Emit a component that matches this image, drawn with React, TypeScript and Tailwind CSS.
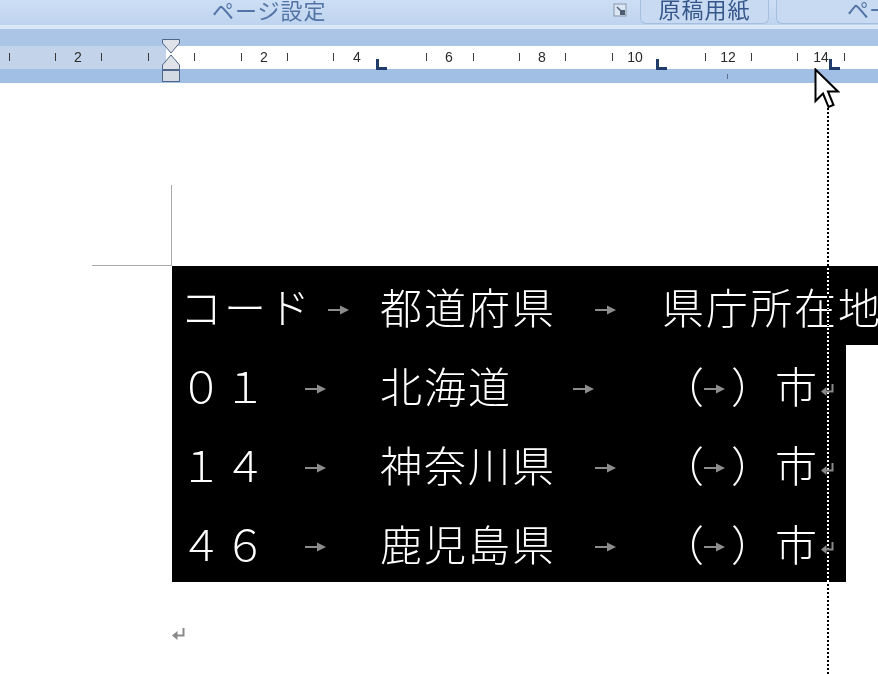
import React from 'react';

const UNIT = 46.4;
const ORIGIN = 171;
const LABELS = [-2, 2, 4, 6, 8, 10, 12, 14];
const TICKS = [-3.5, -2.5, -1.5, -0.5, 0.5, 1.5, 2.5, 3.5, 5.5, 6.5, 7.5, 8.5, 9.5, 11.5, 12.5, 13.5, 14.5];
const TAB_STOPS = [376, 656, 829];

const jp = "font-['Noto_Sans_CJK_JP','Liberation_Sans',sans-serif]";

function TabArrow() {
  return (
    <svg width="22" height="10" viewBox="0 0 22 10" className="mt-[8px] shrink-0">
      <rect x="0" y="4" width="14" height="2" fill="#8c8c8c" />
      <polygon points="12,0.5 21,5 12,9.5" fill="#8c8c8c" />
    </svg>
  );
}

function ReturnMark() {
  return (
    <svg width="14" height="14" viewBox="0 0 14 14" className="shrink-0">
      <path d="M11.5 1 V8.5 H4" stroke="#8a8a8a" strokeWidth="2" fill="none" />
      <polygon points="0,8.5 5.5,4 5.5,13" fill="#8a8a8a" />
    </svg>
  );
}

function Ribbon() {
  return (
    <div className={`flex h-[25px] overflow-hidden bg-linear-to-b from-[#cddff5] to-[#bed3ee] ${jp}`}>
      <div className="flex w-[640px] shrink-0 items-start">
        <span className="ml-[212px] -mt-[4px] text-[22px] leading-[26px] tracking-[1px] text-[#5374a6]">ページ設定</span>
        <svg width="15" height="15" viewBox="0 0 15 15" className="ml-auto mr-[12px] mt-[3px]">
          <rect x="1" y="1" width="12" height="12" fill="#dbe6f3" stroke="#8796ab" />
          <rect x="7" y="7" width="5" height="5" fill="#4d5d74" />
          <path d="M4 4 L9 9" stroke="#4d5d74" strokeWidth="1.5" />
        </svg>
      </div>
      <div className="flex h-[24px] w-[129px] shrink-0 items-start justify-center rounded-b-[6px] border border-t-0 border-[#a6bedf] bg-[#c8daf2]">
        <span className="-mt-[5px] text-[22px] leading-[26px] tracking-[1px] text-[#35578b]">原稿用紙</span>
      </div>
      <div className="ml-[7px] flex h-[24px] min-w-0 flex-1 items-start overflow-hidden rounded-bl-[6px] border border-t-0 border-r-0 border-[#a6bedf] bg-[#c8daf2]">
        <span className="ml-[70px] -mt-[5px] whitespace-nowrap text-[22px] leading-[26px] text-[#5374a6]">ページ罫線</span>
      </div>
    </div>
  );
}

function Ruler() {
  return (
    <div className="relative h-[58px]">
      <div className="h-[4px] bg-[#dae7f6]" />
      <div className="h-[17px] bg-[#abc5e7]" />
      <div className="flex h-[23px]">
        <div className="w-[166px] bg-[#c3d4ea]" />
        <div className="flex-1 bg-white" />
      </div>
      <div className="h-[14px] bg-[#a1bee4]" />

      {TICKS.map((u) => (
        <div
          key={`t${u}`}
          className="absolute top-[28px] h-[8px] w-px bg-[#3a3a3a]"
          style={{ left: Math.round(ORIGIN + u * UNIT) }}
        />
      ))}
      {LABELS.map((u) => (
        <span
          key={`l${u}`}
          className="absolute top-[24px] w-[24px] -translate-x-1/2 text-center font-['Liberation_Sans',sans-serif] text-[14px] leading-[16px] text-[#2a2a2a]"
          style={{ left: Math.round(ORIGIN + u * UNIT) }}
        >
          {Math.abs(u)}
        </span>
      ))}
      {TAB_STOPS.map((x) => (
        <div key={`s${x}`} className="absolute top-[34px] h-[11px] w-[11px]" style={{ left: x }}>
          <div className="h-[8px] w-[3px] bg-[#1f3b69]" />
          <div className="h-[3px] w-[11px] bg-[#1f3b69]" />
        </div>
      ))}
      <div className="absolute left-[727px] top-[49px] h-[5px] w-px bg-[#5b6f8c]" />

      <svg width="20" height="45" viewBox="0 0 20 45" className="absolute left-[161px] top-[13px]">
        <path d="M1.5 1.5 H18.5 V5 L10 15 L1.5 5 Z" fill="#dfe3e9" stroke="#4e6689" />
        <path d="M10 17 L18.5 27 V31.5 H1.5 V27 Z" fill="#dfe3e9" stroke="#4e6689" />
        <rect x="1.5" y="32.5" width="17" height="11" fill="#d4dae3" stroke="#4e6689" />
      </svg>
    </div>
  );
}

interface RowProps {
  first: string;
  firstW: string;
  firstGap: string;
  second: string;
  secondW: string;
  secondGap: string;
  children: React.ReactNode;
  wide?: boolean;
}

function Row({ first, firstW, firstGap, second, secondW, secondGap, children, wide }: RowProps) {
  return (
    <div className={`flex h-[79px] items-center bg-black pl-[8px] text-[42px] font-light leading-none tracking-[2px] text-white ${wide ? 'w-[706px]' : 'w-[674px]'}`}>
      <span className={`${firstW} shrink-0 whitespace-nowrap`}>{first}</span>
      <div className={`${firstGap} flex shrink-0`}>
        <TabArrow />
      </div>
      <span className={`${secondW} shrink-0 whitespace-nowrap`}>{second}</span>
      <div className={`${secondGap} flex shrink-0`}>
        <TabArrow />
      </div>
      {children}
    </div>
  );
}

function CityCell() {
  return (
    <div className="flex items-center">
      <span className="w-[42px] shrink-0">（</span>
      <div className="flex w-[27px] shrink-0">
        <TabArrow />
      </div>
      <span className="w-[44px] shrink-0">）</span>
      <span className="w-[46px] shrink-0">市</span>
      <div className="mt-[10px]">
        <ReturnMark />
      </div>
    </div>
  );
}

function Document() {
  return (
    <div className={`flex flex-col ${jp}`}>
      <div className="ml-[92px] mt-[102px] h-[81px] w-[80px] border-r border-b border-[#a8a8a8]" />
      <div className="ml-[172px] flex flex-col">
        <Row first="コード" firstW="w-[148px]" firstGap="w-[52px]" second="都道府県" secondW="w-[215px]" secondGap="w-[67px]" wide>
          <span className="whitespace-nowrap">県庁所在地</span>
        </Row>
        <Row first="０１" firstW="w-[125px]" firstGap="w-[75px]" second="北海道" secondW="w-[193px]" secondGap="w-[89px]">
          <CityCell />
        </Row>
        <Row first="１４" firstW="w-[125px]" firstGap="w-[75px]" second="神奈川県" secondW="w-[215px]" secondGap="w-[67px]">
          <CityCell />
        </Row>
        <Row first="４６" firstW="w-[125px]" firstGap="w-[75px]" second="鹿児島県" secondW="w-[215px]" secondGap="w-[67px]">
          <CityCell />
        </Row>
      </div>
      <div className="ml-[172px] mt-[45px]">
        <ReturnMark />
      </div>
    </div>
  );
}

export default function App() {
  return (
    <div className="relative h-[674px] w-[878px] overflow-hidden bg-white">
      <Ribbon />
      <Ruler />
      <Document />

      <div className="pointer-events-none absolute bottom-0 left-[827px] top-[100px] border-l-2 border-dotted border-white mix-blend-difference" />

      <svg width="26" height="42" viewBox="0 0 26 42" className="pointer-events-none absolute left-[814px] top-[68px]">
        <path d="M1.5 1.5 V33 L9 25.5 L14.5 39 L19.5 37 L14 23.5 H24 Z" fill="white" stroke="black" strokeWidth="2" strokeLinejoin="miter" />
      </svg>
    </div>
  );
}
